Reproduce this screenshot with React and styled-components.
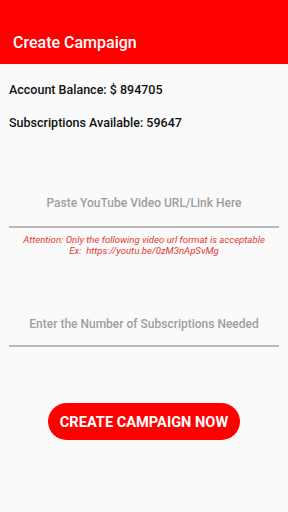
import React from 'react'
import styled, { createGlobalStyle } from 'styled-components'

const Global = createGlobalStyle`
    html, body {
        margin: 0;
        padding: 0;
        background: #fafafa;
        font-family: Roboto, 'Liberation Sans', sans-serif;
    }
`

const Page = styled.div`
    width: 288px;
    height: 512px;
    background: #fafafa;
    display: flex;
    flex-direction: column;
    overflow: hidden;
`

const AppBar = styled.header`
    height: 64px;
    background: #ff0000;
    display: flex;
    align-items: flex-end;
    padding: 0 13px 12px;
    box-sizing: border-box;

    h1 {
        margin: 0;
        color: #fff;
        font-size: 16px;
        font-weight: 500;
    }
`

const Body = styled.main`
    display: flex;
    flex-direction: column;
    padding: 0 9px;
`

const InfoLine = styled.p`
    margin: ${({top}) => top}px 0 0;
    font-size: 12.5px;
    font-weight: 500;
    color: #111;
    line-height: 16px;
`

const Field = styled.div`
    margin-top: ${({top}) => top}px;
    border-bottom: 2px solid #b8b8b8;
    height: ${({h}) => h}px;
    display: flex;
    align-items: flex-start;
    justify-content: center;
`

const Input = styled.input`
    width: 100%;
    border: none;
    outline: none;
    background: transparent;
    text-align: center;
    font-family: Roboto, 'Liberation Sans', sans-serif;
    font-size: 12px;
    font-weight: 500;
    padding: 0;
    height: 16px;

    &::placeholder {
        color: #9e9e9e;
    }
`

const Notice = styled.p`
    margin: 6px 0 0;
    text-align: center;
    color: #e53935;
    font-style: italic;
    font-size: 9.6px;
    line-height: 11px;
    white-space: pre;
`

const Button = styled.button`
    align-self: center;
    margin-top: 56px;
    width: 192px;
    height: 37px;
    border: none;
    border-radius: 19px;
    background: #ff0000;
    color: #fff;
    font-family: Roboto, 'Liberation Sans', sans-serif;
    font-size: 14.6px;
    font-weight: 700;
    text-transform: uppercase;
    cursor: pointer;
`

export default function App() {
    return (
        <Page>
            <Global />
            <AppBar>
                <h1>Create Campaign</h1>
            </AppBar>
            <Body>
                <InfoLine top={18}>Account Balance: $ 894705</InfoLine>
                <InfoLine top={17}>Subscriptions Available: 59647</InfoLine>

                <Field top={64} h={31}>
                    <Input placeholder="Paste YouTube Video URL/Link Here" />
                </Field>
                <Notice>{'Attention: Only the following video url format is acceptable\nEx:  https://youtu.be/0zM3nApSvMg'}</Notice>

                <Field top={60} h={29}>
                    <Input placeholder="Enter the Number of Subscriptions Needed" />
                </Field>

                <Button>Create Campaign Now</Button>
            </Body>
        </Page>
    )
}
